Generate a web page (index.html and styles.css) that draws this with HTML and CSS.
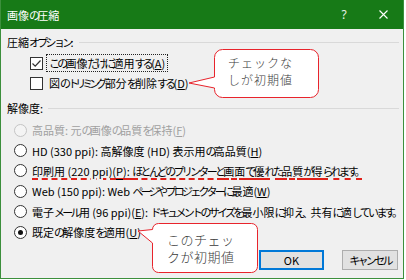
FILE: index.html
```html
<!DOCTYPE html>
<html lang="ja">
<head>
<meta charset="utf-8">
<link rel="stylesheet" href="styles.css">
</head>
<body>
<div class="win">
  <div class="titlebar">
    <span class="title">画像<span class="k">の</span>圧縮</span>
    <span class="help">?</span>
    <span class="close"><svg width="9" height="9" viewBox="0 0 9 9"><path d="M0.5 0.5 L8.5 8.5 M8.5 0.5 L0.5 8.5" stroke="#fff" stroke-width="1.1" fill="none"/></svg></span>
  </div>
  <div class="content">
    <div class="ghead"><span class="lbl0">圧縮<span class="k">オプション</span>:</span><span class="sep"></span></div>
    <div class="checks">
      <div class="row"><span class="cb"><svg width="13" height="13" viewBox="0 0 13 13"><path d="M2.5 6.5 L5.2 9.2 L10.5 3.5" stroke="#333" stroke-width="1.2" fill="none"/></svg></span><span class="lbl focus"><span class="k">この</span>画像<span class="k">だけに</span>適用<span class="k">する</span>(<u>A</u>)</span></div>
      <div class="row"><span class="cb"></span><span class="lbl">図<span class="k">の</span><span class="kn">トリミン</span><span class="k">グ</span>部分<span class="k">を</span>削除<span class="k">する</span>(<u>D</u>)</span></div>
    </div>
    <div class="ghead g2"><span class="lbl0">解像度:</span><span class="sep"></span></div>
    <div class="radios">
      <div class="row disabled"><span class="rb"></span><span class="lbl">高品質: 元<span class="k">の</span>画像<span class="k">の</span>品質<span class="k">を</span>保持(<u>F</u>)</span></div>
      <div class="row"><span class="rb"></span><span class="lbl">HD (330 ppi): 高解像度 (HD) 表示用<span class="k">の</span>高品質(<u>H</u>)</span></div>
      <div class="row"><span class="rb"></span><span class="lbl"><span class="spell">印刷用 (220 ppi)(<u>P</u>): <span class="k">ほとんどのプリンターと</span>画面<span class="k">で</span>優<span class="k">れた</span>品質<span class="k">が</span>得<span class="k">られます。</span></span></span></div>
      <div class="row"><span class="rb"></span><span class="lbl">Web (150 ppi): Web <span class="k">ページやプロジェクターに</span>最適(<u>W</u>)</span></div>
      <div class="row"><span class="rb"></span><span class="lbl">電子<span class="k">メール</span>用 (96 ppi)(<u>E</u>): <span class="k">ドキュメントのサイズを</span>最小限<span class="k">に</span>抑<span class="k">え、</span>共有<span class="k">に</span>適<span class="k">しています。</span></span></div>
      <div class="row"><span class="rb on"></span><span class="lbl">既定<span class="k">の</span>解像度<span class="k">を</span>適用(<u>U</u>)</span></div>
    </div>
    <div class="buttons">
      <span class="btn ok">OK</span>
      <span class="btn cancel"><span class="k">キャンセル</span></span>
    </div>
  </div>
  <svg class="callouts" width="406" height="280" viewBox="0 0 406 280">
    <path d="M222.5,49.5 H310.5 A8,8 0 0 1 318.5,57.5 V89.5 A8,8 0 0 1 310.5,97.5 H222.5 A8,8 0 0 1 214.5,89.5 V88 L189,83 L214.5,77 V57.5 A8,8 0 0 1 222.5,49.5 Z" fill="#fff" stroke="#e8242c" stroke-width="1"/>
    <path d="M158.5,223.5 H251.5 A6,6 0 0 1 257.5,229.5 V266.5 A6,6 0 0 1 251.5,272.5 H158.5 A6,6 0 0 1 152.5,266.5 V243 L138,231 L152.5,229.5 A6,6 0 0 1 158.5,223.5 Z" fill="#fff" stroke="#e8242c" stroke-width="1"/>
  </svg>
  <div class="note n1">チェックな<br>しが初期値</div>
  <div class="note n2">このチェッ<br>クが初期値</div>
</div>
</body>
</html>
```

FILE: styles.css
```css
html, body {
  margin: 0;
  padding: 0;
  background: #ffffff;
}
body {
  font-family: "Noto Sans CJK JP", "Noto Sans", sans-serif;
  font-size: 11px;
  color: #000;
}
.win {
  position: relative;
  width: 404px;
  height: 279px;
  box-sizing: border-box;
  border: 1px solid #3c8f3c;
  border-top: 0;
  background: #f0f0f0;
  overflow: hidden;
}
.titlebar, .content {
  white-space: nowrap;
}
.k {
  letter-spacing: -2.7px;
}
.kn {
  letter-spacing: -4px;
}
.titlebar {
  height: 29px;
  background: #177a17;
  color: #fff;
  display: flex;
  align-items: center;
  padding-left: 6px;
}
.title {
  flex: 1;
  line-height: 14px;
  margin-top: 1px;
}
.help {
  width: 24px;
  text-align: center;
  font-family: "Noto Sans", sans-serif;
  font-size: 12px;
  margin-right: 8px;
  color: #e8f2e8;
}
.close {
  width: 39px;
  display: flex;
  justify-content: center;
  align-items: center;
}
.content {
  padding: 6px 4px 0 6px;
}
.ghead {
  height: 14px;
  line-height: 14px;
  display: flex;
  align-items: center;
  gap: 5px;
}
.ghead.g2 {
  margin-top: 8px;
}
.sep {
  flex: 1;
  height: 1px;
  background: #d9d9d9;
}
.checks {
  margin-top: 4px;
  padding-left: 23px;
}
.row {
  height: 20px;
  display: flex;
  align-items: center;
}
.radios .row {
  height: 20.4px;
}
.cb {
  flex: none;
  width: 13px;
  height: 13px;
  box-sizing: border-box;
  border: 1px solid #333;
  background: #fff;
  margin-right: 4px;
  display: flex;
}
.cb svg {
  margin: -1px;
}
.lbl {
  line-height: 14px;
  padding: 0 2px;
}
.focus {
  outline: 1px dotted #222;
  outline-offset: 0;
  padding-top: 1px;
  padding-bottom: 1px;
}
.radios {
  margin-top: 5px;
  padding-left: 7px;
}
.rb {
  flex: none;
  width: 13px;
  height: 13px;
  box-sizing: border-box;
  border: 1px solid #333;
  border-radius: 50%;
  background: #fff;
  margin-right: 3px;
  display: flex;
  align-items: center;
  justify-content: center;
}
.rb.on::after {
  content: "";
  width: 5px;
  height: 5px;
  border-radius: 50%;
  background: #111;
}
.disabled .rb {
  border-color: #c4c4c4;
  background: #f4f4f4;
}
.disabled .lbl {
  color: #a0a0a0;
}
.spell {
  text-decoration: underline dashed #e0201a;
  text-decoration-thickness: 2px;
  text-underline-offset: 3px;
}
.buttons {
  margin-top: 7.5px;
  display: flex;
  justify-content: flex-end;
  gap: 18px;
  padding-right: 1px;
}
.btn {
  height: 20px;
  box-sizing: border-box;
  background: #e1e1e1;
  border: 1px solid #adadad;
  display: flex;
  align-items: center;
  justify-content: center;
  line-height: 14px;
}
.ok {
  width: 65px;
  border-color: #0078d7;
  box-shadow: inset 0 0 0 1px #0078d7;
}
.cancel {
  width: 56px;
}
.callouts {
  position: absolute;
  left: -1px;
  top: 0;
  pointer-events: none;
}
.note {
  position: absolute;
  color: #3a3a3a;
  font-weight: 300;
  line-height: 17px;
  white-space: nowrap;
}
.n1 {
  left: 227px;
  top: 54px;
  font-size: 12px;
  letter-spacing: 1px;
}
.n2 {
  left: 166px;
  top: 231px;
  font-size: 13px;
  letter-spacing: 0.5px;
}
```
